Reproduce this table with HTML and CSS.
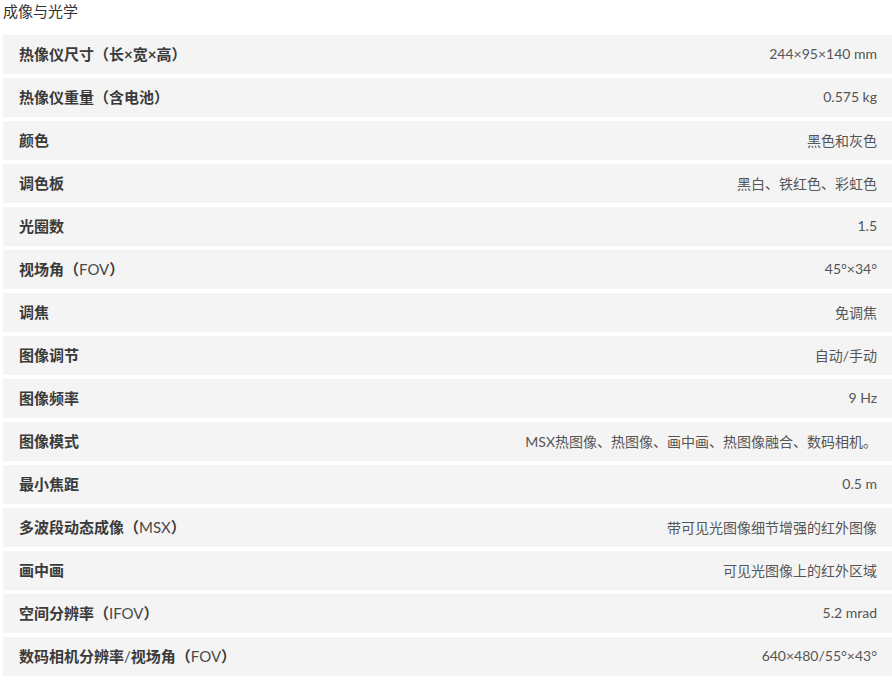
FILE: index.html
```html
<!DOCTYPE html>
<html lang="zh-CN">
<head>
    <meta charset="UTF-8">
    <meta name="viewport" content="width=device-width, initial-scale=1.0">
    <title>成像与光学</title>
    <link rel="stylesheet" href="styles.css">
</head>
<body>
    <div class="spec-section">
        <h2 class="spec-title">成像与光学</h2>
        <div class="spec-list">
            <div class="spec-row"><span class="spec-label">热像仪尺寸（长×宽×高）</span><span class="spec-value">244×95×140 mm</span></div>
            <div class="spec-row"><span class="spec-label">热像仪重量（含电池）</span><span class="spec-value">0.575 kg</span></div>
            <div class="spec-row"><span class="spec-label">颜色</span><span class="spec-value">黑色和灰色</span></div>
            <div class="spec-row"><span class="spec-label">调色板</span><span class="spec-value">黑白、铁红色、彩虹色</span></div>
            <div class="spec-row"><span class="spec-label">光圈数</span><span class="spec-value">1.5</span></div>
            <div class="spec-row"><span class="spec-label">视场角（<span class="latin">FOV</span>）</span><span class="spec-value">45°×34°</span></div>
            <div class="spec-row"><span class="spec-label">调焦</span><span class="spec-value">免调焦</span></div>
            <div class="spec-row"><span class="spec-label">图像调节</span><span class="spec-value">自动/手动</span></div>
            <div class="spec-row"><span class="spec-label">图像频率</span><span class="spec-value">9 Hz</span></div>
            <div class="spec-row"><span class="spec-label">图像模式</span><span class="spec-value">MSX热图像、热图像、画中画、热图像融合、数码相机。</span></div>
            <div class="spec-row"><span class="spec-label">最小焦距</span><span class="spec-value">0.5 m</span></div>
            <div class="spec-row"><span class="spec-label">多波段动态成像（<span class="latin">MSX</span>）</span><span class="spec-value">带可见光图像细节增强的红外图像</span></div>
            <div class="spec-row"><span class="spec-label">画中画</span><span class="spec-value">可见光图像上的红外区域</span></div>
            <div class="spec-row"><span class="spec-label">空间分辨率（<span class="latin">IFOV</span>）</span><span class="spec-value">5.2 mrad</span></div>
            <div class="spec-row"><span class="spec-label">数码相机分辨率<span class="latin">/</span>视场角（<span class="latin">FOV</span>）</span><span class="spec-value">640×480/55°×43°</span></div>
        </div>
    </div>
</body>
</html>
```

FILE: styles.css
```css
* {
    margin: 0;
    padding: 0;
    box-sizing: border-box;
    font-family: 'Lato', 'Noto Sans CJK SC', sans-serif;
}

body {
    background: #fff;
    color: #333;
}

.spec-section {
    padding-left: 3px;
}

.spec-title {
    font-size: 15px;
    font-weight: normal;
    line-height: 22px;
    color: #333;
    margin-bottom: 13px;
}

.spec-row {
    display: flex;
    justify-content: space-between;
    align-items: center;
    height: 39px;
    margin-bottom: 4px;
    padding: 0 15px 2px 16px;
    background: #f4f4f4;
}

.spec-label {
    font-size: 15px;
    font-weight: bold;
    color: #3a3a3a;
}

.spec-label .latin {
    font-weight: normal;
    color: #4a4a4a;
}

.spec-value {
    font-size: 14px;
    color: #555;
}
```
